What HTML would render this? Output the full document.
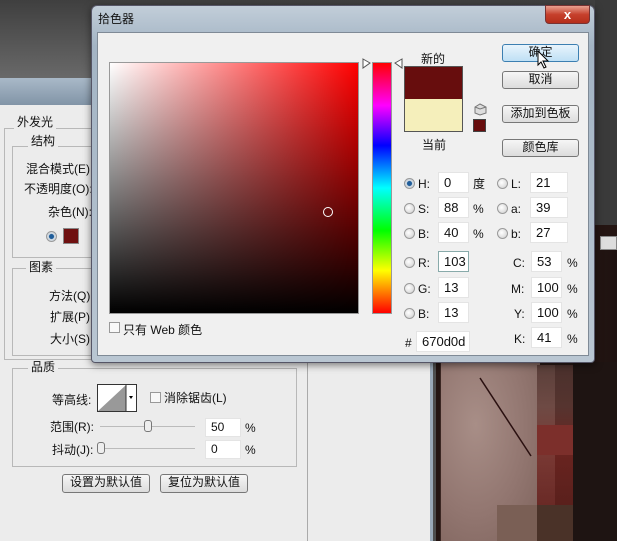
<!DOCTYPE html>
<html><head><meta charset="utf-8"><style>
*{margin:0;padding:0;box-sizing:border-box}
body{width:617px;height:541px;overflow:hidden;position:relative;background:#4e4e4e;font-family:"Liberation Sans","Noto Sans CJK SC",sans-serif;font-size:12px;color:#111}
.a{position:absolute}
.t{position:absolute;white-space:nowrap;line-height:14px}
.inp{position:absolute;background:#fff;border:1px solid #e4e4e4;height:21px;padding-left:5px;line-height:19px;font-size:13px}
.rad{position:absolute;width:11px;height:11px;border-radius:50%;border:1px solid #9a9a9a;background:radial-gradient(circle at 40% 40%,#fff,#ccc)}
.btn{position:absolute;border:1px solid #777;border-radius:3px;background:linear-gradient(#f6f6f6,#dcdcdc);text-align:center;line-height:15px;font-size:12px}
.fs{position:absolute;border:1px solid #b8b8b8}
.lg{position:absolute;background:#ececec;padding:0 3px;line-height:14px}
</style></head><body>
<div class="a" style="left:0;top:0;width:617px;height:80px;background:linear-gradient(#3f3f3f,#6a6a6a)"></div>
<div class="a" style="left:595px;top:0;width:22px;height:541px;background:#3a3a3a"></div>
<!-- image area -->
<div class="a" style="left:436px;top:225px;width:181px;height:316px;background:#241512"></div>
<div class="a" style="left:600px;top:236px;width:17px;height:14px;background:#ddd;border:1px solid #888"></div>
<div class="a" style="left:440px;top:250px;width:177px;height:291px;background:linear-gradient(90deg,#3a2622 0,#2d1c18 60%,#1e1210 100%)"></div>
<div class="a" style="left:441px;top:362px;width:99px;height:179px;background:radial-gradient(ellipse at 35% 35%,#a88e87,#927670 55%,#7d625b)"></div>
<div class="a" style="left:537px;top:365px;width:18px;height:140px;background:linear-gradient(#5a3f3a,#6e4a44 30%,#7a3a35 60%,#6a2a26)"></div>
<div class="a" style="left:555px;top:365px;width:18px;height:140px;background:linear-gradient(#4a302c,#56342f 30%,#6a2420 60%,#5a201c)"></div>
<div class="a" style="left:537px;top:425px;width:36px;height:30px;background:#7c2f2b"></div>
<div class="a" style="left:497px;top:505px;width:40px;height:36px;background:#7a5f55"></div>
<div class="a" style="left:537px;top:505px;width:36px;height:36px;background:#4a3228"></div>
<div class="a" style="left:573px;top:362px;width:44px;height:179px;background:#1e1412"></div>
<svg class="a" style="left:440px;top:362px" width="120" height="120"><line x1="40" y1="16" x2="91" y2="94" stroke="#2a1010" stroke-width="1.5"/></svg>
<!-- left panel -->
<div class="a" style="left:0;top:78px;width:437px;height:30px;background:linear-gradient(#a9b9c8,#7d90a3)"></div>
<div class="a" style="left:0;top:105px;width:433px;height:436px;background:#ececec;border-right:3px solid #9aa9b8"></div>
<div class="a" style="left:307px;top:360px;width:1px;height:181px;background:#aaa"></div>
<div class="fs" style="left:4px;top:128px;width:300px;height:232px"></div>
<div class="lg" style="left:14px;top:115px">外发光</div>
<div class="fs" style="left:12px;top:146px;width:285px;height:112px"></div>
<div class="lg" style="left:28px;top:134px">结构</div>
<div class="t" style="left:26px;top:162px">混合模式(E):</div>
<div class="t" style="left:24px;top:182px">不透明度(O):</div>
<div class="t" style="left:48px;top:205px">杂色(N):</div>
<div class="rad" style="left:46px;top:231px;background:radial-gradient(circle,#1f5d9a 35%,#cfd8e0 45%)"></div>
<div class="a" style="left:63px;top:228px;width:16px;height:16px;background:#6f1010;border:1px solid #888"></div>
<div class="fs" style="left:12px;top:268px;width:285px;height:88px"></div>
<div class="lg" style="left:26px;top:260px">图素</div>
<div class="t" style="left:49px;top:289px">方法(Q):</div>
<div class="t" style="left:50px;top:310px">扩展(P):</div>
<div class="t" style="left:50px;top:332px">大小(S):</div>
<div class="fs" style="left:12px;top:368px;width:285px;height:99px"></div>
<div class="lg" style="left:28px;top:360px">品质</div>
<div class="t" style="left:52px;top:393px">等高线:</div>
<div class="a" style="left:97px;top:384px;width:40px;height:28px;background:#fff;border:1px solid #333"></div>
<svg class="a" style="left:98px;top:385px" width="38" height="26"><polygon points="0,26 28,0 28,26" fill="#999"/><line x1="28" y1="0" x2="28" y2="26" stroke="#333"/><polygon points="31,11 35,11 33,14" fill="#000"/></svg>
<div class="a" style="left:150px;top:392px;width:11px;height:11px;border:1px solid #999;background:#f8f8f8"></div>
<div class="t" style="left:164px;top:391px">消除锯齿(L)</div>
<div class="t" style="left:50px;top:420px">范围(R):</div>
<div class="a" style="left:100px;top:426px;width:95px;height:1px;background:#bbb"></div>
<div class="a" style="left:144px;top:420px;width:8px;height:12px;border:1px solid #777;border-radius:3px;background:#eee"></div>
<div class="inp" style="left:205px;top:418px;width:36px;height:19px;line-height:17px;font-size:12px">50</div>
<div class="t" style="left:245px;top:421px">%</div>
<div class="t" style="left:52px;top:443px">抖动(J):</div>
<div class="a" style="left:100px;top:448px;width:95px;height:1px;background:#bbb"></div>
<div class="a" style="left:97px;top:442px;width:8px;height:12px;border:1px solid #777;border-radius:3px;background:#eee"></div>
<div class="inp" style="left:205px;top:440px;width:36px;height:19px;line-height:17px;font-size:12px">0</div>
<div class="t" style="left:245px;top:443px">%</div>
<div class="btn" style="left:62px;top:474px;width:88px;height:19px">设置为默认值</div>
<div class="btn" style="left:160px;top:474px;width:88px;height:19px">复位为默认值</div>
<!-- dialog -->
<div class="a" style="left:91px;top:5px;width:504px;height:358px;border-radius:6px 6px 4px 4px;background:linear-gradient(#c2ced9,#a3b4c4 40px,#b9c6d2);border:1px solid #556;box-shadow:0 2px 8px rgba(0,0,0,.5)"></div>
<div class="t" style="left:98px;top:12px;color:#111">拾色器</div>
<div class="a" style="left:545px;top:5px;width:45px;height:19px;border-radius:0 0 4px 4px;background:linear-gradient(#e8a090,#c6402c 50%,#b52e1b);border:1px solid #733;color:#fff;text-align:center;font-weight:bold;line-height:17px;font-size:13px">x</div>
<div class="a" style="left:97px;top:32px;width:492px;height:324px;background:#f0f0f0;border:1px solid #7f8a96"></div>
<div class="a" style="left:109px;top:62px;width:250px;height:252px;border:1px solid #999;background:linear-gradient(to bottom,rgba(0,0,0,0),#000),linear-gradient(to right,#fff,#f00)"></div>
<div class="a" style="left:323px;top:207px;width:10px;height:10px;border:1px solid #fff;border-radius:50%"></div>
<div class="a" style="left:372px;top:62px;width:20px;height:252px;border:1px solid #999;background:linear-gradient(#f00,#f0f 17%,#00f 33%,#0ff 50%,#0f0 67%,#ff0 83%,#f00)"></div>
<svg class="a" style="left:362px;top:58px" width="42" height="12"><polygon points="1,1 8,5 1,10" fill="#fff" stroke="#555"/><polygon points="40,1 33,5 40,10" fill="#fff" stroke="#555"/></svg>
<div class="t" style="left:421px;top:52px">新的</div>
<div class="a" style="left:404px;top:66px;width:59px;height:66px;border:1px solid #555;background:linear-gradient(#670d0d 50%,#f5efbb 50%)"></div>
<div class="t" style="left:422px;top:138px">当前</div>
<svg class="a" style="left:474px;top:103px" width="13" height="13"><polygon points="6,1 12,4 12,10 6,12 1,10 1,4" fill="#ddd" stroke="#777"/><polyline points="1,4 6,6 12,4 M6,6 6,12" fill="none" stroke="#777"/></svg>
<div class="a" style="left:473px;top:119px;width:13px;height:13px;background:#670d0d;border:1px solid #444"></div>
<div class="btn" style="left:502px;top:44px;width:77px;height:18px;background:linear-gradient(#e8f4fc,#bfe0f5);border-color:#3c7fb1">确定</div>
<svg class="a" style="left:537px;top:50px" width="14" height="20"><polygon points="1,1 1,15 4,12 7,18 9,17 6,11 11,11" fill="#fff" stroke="#000"/></svg>
<div class="btn" style="left:502px;top:71px;width:77px;height:18px">取消</div>
<div class="btn" style="left:502px;top:105px;width:77px;height:18px">添加到色板</div>
<div class="btn" style="left:502px;top:139px;width:77px;height:18px">颜色库</div>
<!-- HSB -->
<div class="rad" style="left:404px;top:178px;background:radial-gradient(circle,#1f5d9a 35%,#cfd8e0 45%)"></div><div class="t" style="left:418px;top:177px">H:</div><div class="inp" style="left:438px;top:172px;width:31px">0</div><div class="t" style="left:473px;top:177px">度</div>
<div class="rad" style="left:404px;top:203px"></div><div class="t" style="left:418px;top:202px">S:</div><div class="inp" style="left:438px;top:197px;width:31px">88</div><div class="t" style="left:473px;top:202px">%</div>
<div class="rad" style="left:404px;top:228px"></div><div class="t" style="left:418px;top:227px">B:</div><div class="inp" style="left:438px;top:222px;width:31px">40</div><div class="t" style="left:473px;top:227px">%</div>
<div class="rad" style="left:404px;top:257px"></div><div class="t" style="left:418px;top:256px">R:</div><div class="inp" style="left:438px;top:251px;width:31px;border-color:#8aa">103</div>
<div class="rad" style="left:404px;top:283px"></div><div class="t" style="left:418px;top:282px">G:</div><div class="inp" style="left:438px;top:277px;width:31px">13</div>
<div class="rad" style="left:404px;top:308px"></div><div class="t" style="left:418px;top:307px">B:</div><div class="inp" style="left:438px;top:302px;width:31px">13</div>
<div class="t" style="left:405px;top:336px">#</div><div class="inp" style="left:416px;top:331px;width:54px">670d0d</div>
<div class="rad" style="left:497px;top:178px"></div><div class="t" style="left:511px;top:177px">L:</div><div class="inp" style="left:530px;top:172px;width:38px">21</div>
<div class="rad" style="left:497px;top:203px"></div><div class="t" style="left:511px;top:202px">a:</div><div class="inp" style="left:530px;top:197px;width:38px">39</div>
<div class="rad" style="left:497px;top:228px"></div><div class="t" style="left:511px;top:227px">b:</div><div class="inp" style="left:530px;top:222px;width:38px">27</div>
<div class="t" style="left:513px;top:256px">C:</div><div class="inp" style="left:531px;top:251px;width:31px">53</div><div class="t" style="left:567px;top:256px">%</div>
<div class="t" style="left:511px;top:282px">M:</div><div class="inp" style="left:531px;top:277px;width:31px">100</div><div class="t" style="left:567px;top:282px">%</div>
<div class="t" style="left:514px;top:307px">Y:</div><div class="inp" style="left:531px;top:302px;width:31px">100</div><div class="t" style="left:567px;top:307px">%</div>
<div class="t" style="left:514px;top:332px">K:</div><div class="inp" style="left:531px;top:327px;width:31px">41</div><div class="t" style="left:567px;top:332px">%</div>
<div class="a" style="left:109px;top:322px;width:11px;height:11px;border:1px solid #999;background:#f8f8f8"></div>
<div class="t" style="left:123px;top:323px">只有 Web 颜色</div>
</body></html>
